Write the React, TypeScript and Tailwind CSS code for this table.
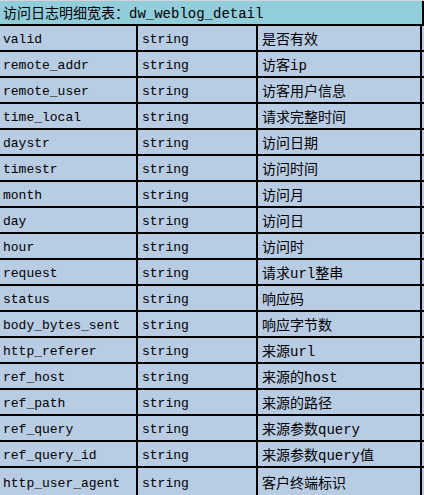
const ROWS: [string, string, string][] = [
  ["valid", "string", "是否有效"],
  ["remote_addr", "string", "访客ip"],
  ["remote_user", "string", "访客用户信息"],
  ["time_local", "string", "请求完整时间"],
  ["daystr", "string", "访问日期"],
  ["timestr", "string", "访问时间"],
  ["month", "string", "访问月"],
  ["day", "string", "访问日"],
  ["hour", "string", "访问时"],
  ["request", "string", "请求url整串"],
  ["status", "string", "响应码"],
  ["body_bytes_sent", "string", "响应字节数"],
  ["http_referer", "string", "来源url"],
  ["ref_host", "string", "来源的host"],
  ["ref_path", "string", "来源的路径"],
  ["ref_query", "string", "来源参数query"],
  ["ref_query_id", "string", "来源参数query值"],
  ["http_user_agent", "string", "客户终端标识"],
];

const App = () => {
  return (
    <div
      className="w-[424px] h-[495px] overflow-hidden bg-white text-[13px] text-black"
      style={{ fontFamily: '"Liberation Mono", "Noto Sans CJK SC", monospace' }}
    >
      <div className="border-t border-[#d4d4d4]">
        <div className="flex h-[25px] items-center bg-[#92cddc] border-b-2 border-r-2 border-black pl-[3px] pt-[3px] text-[14px]">
          访问日志明细宽表：dw_weblog_detail
        </div>
        {ROWS.map(([name, type, desc], i) => (
          <div
            key={name}
            className={
              "flex bg-[#b8cce4] " +
              (i === ROWS.length - 1 ? "h-[28px]" : "h-[26px] border-b-2 border-black")
            }
          >
            <div className="w-[138px] flex items-center pl-[3px] pt-[4px] border-r-2 border-black">
              {name}
            </div>
            <div className="w-[120px] flex items-center pl-[4px] pt-[4px] border-r-2 border-black">
              {type}
            </div>
            <div className="w-[164px] flex items-center pl-[4px] pt-[4px] border-r-2 border-black text-[14px]">
              {desc}
            </div>
          </div>
        ))}
      </div>
    </div>
  );
};

export default App;
